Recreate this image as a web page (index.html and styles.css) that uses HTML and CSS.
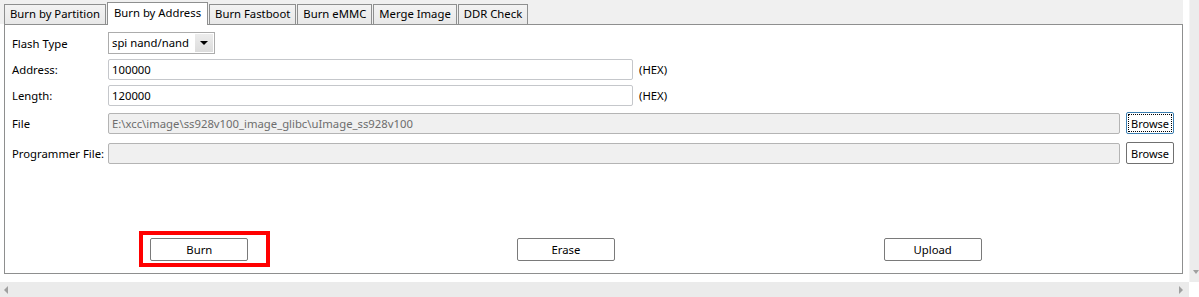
FILE: index.html
```html
<!DOCTYPE html>
<html lang="en">
<head>
  <meta charset="UTF-8" />
  <title>Burn by Address</title>
  <link rel="stylesheet" href="styles.css">
</head>
<body>
  <div class="frame">
    <div class="main">
      <div class="tabs">
        <div class="tab">Burn by Partition</div>
        <div class="tab active">Burn by Address</div>
        <div class="tab">Burn Fastboot</div>
        <div class="tab">Burn eMMC</div>
        <div class="tab">Merge Image</div>
        <div class="tab">DDR Check</div>
      </div>

      <div class="panel">
        <div class="row row-flash">
          <label>Flash Type</label>
          <div class="select">
            <span class="select-text">spi nand/nand</span>
            <span class="select-btn"><span class="caret"></span></span>
          </div>
        </div>

        <div class="row row-addr">
          <label>Address:</label>
          <input type="text" class="field short" value="100000" />
          <span class="unit">(HEX)</span>
        </div>

        <div class="row row-len">
          <label>Length:</label>
          <input type="text" class="field short" value="120000" />
          <span class="unit">(HEX)</span>
        </div>

        <div class="row row-file">
          <label>File</label>
          <input type="text" class="field wide" value="E:\xcc\image\ss928v100_image_glibc\uImage_ss928v100" disabled />
          <button class="browse focused">Browse</button>
        </div>

        <div class="row row-prog">
          <label>Programmer File:</label>
          <input type="text" class="field wide" value="" disabled />
          <button class="browse">Browse</button>
        </div>

        <div class="actions">
          <div class="cell">
            <button class="action">Burn</button>
            <span class="highlight"></span>
          </div>
          <div class="cell">
            <button class="action">Erase</button>
          </div>
          <div class="cell">
            <button class="action">Upload</button>
          </div>
        </div>
      </div>
    </div>

    <div class="vscroll">
      <span class="arrow-down"></span>
    </div>
  </div>

  <div class="hscroll">
    <span class="arrow-left"></span>
    <span class="arrow-right"></span>
  </div>
</body>
</html>
```

FILE: styles.css
```css
* {
  box-sizing: border-box;
}
body {
  margin: 0;
  padding: 0;
  background: #fff;
  font-family: 'Noto Sans', 'Liberation Sans', sans-serif;
  font-size: 11.3px;
  color: #000;
}
.frame {
  display: flex;
  height: 282px;
}
.main {
  width: 1183px;
}
.tabs {
  display: flex;
  align-items: flex-end;
  height: 24px;
  padding-left: 4px;
  background: #f0f0f0;
}
.tab {
  height: 20px;
  padding: 0 5px;
  line-height: 18px;
  border: 1px solid #8e8f8f;
  border-bottom: none;
  background: linear-gradient(#f3f3f3, #e8e8e8);
  margin-right: 1px;
  white-space: nowrap;
}
.tab.active {
  position: relative;
  z-index: 1;
  height: 23px;
  margin-bottom: -1px;
  padding: 0 6px;
  line-height: 20px;
  background: #fff;
}
.panel {
  margin-left: 4px;
  height: 250px;
  border: 1px solid #8e8f8f;
  background: #fff;
  padding: 7px 8px 0 7px;
}
.row {
  display: flex;
  align-items: center;
}
.row label {
  width: 96px;
  flex: none;
  white-space: nowrap;
}
.row-flash { height: 22px; }
.row-addr { height: 21px; margin-top: 5px; }
.row-len { height: 21px; margin-top: 5px; }
.row-file { height: 22px; margin-top: 6px; }
.row-prog { height: 22px; margin-top: 8px; }

.select {
  display: flex;
  width: 107px;
  height: 22px;
  border: 1px solid #acacac;
  background: #fff;
  padding: 1px;
}
.select-text {
  flex: 1;
  padding-left: 2px;
  line-height: 18px;
  white-space: nowrap;
}
.select-btn {
  width: 18px;
  background: linear-gradient(#ececec, #dcdcdc);
  display: flex;
  align-items: center;
  justify-content: center;
}
.caret {
  width: 0;
  height: 0;
  border-left: 4px solid transparent;
  border-right: 4px solid transparent;
  border-top: 4px solid #000;
}

.field {
  height: 21px;
  border: 1px solid #c5c7cb;
  border-radius: 2px;
  padding: 0 3px;
  font: inherit;
  color: #000;
  background: #fff;
}
.field.short {
  width: 525px;
}
.field.wide {
  flex: 1;
  border-color: #b4b4b4;
  background: #f0f0f0;
  color: #6d6d6d;
}
.unit {
  margin-left: 6px;
}
.browse {
  width: 48px;
  height: 22px;
  margin-left: 6px;
  padding: 0;
  font: inherit;
  font-size: 11px;
  background: #fff;
  border: 1px solid #707070;
  border-radius: 2px;
}
.browse.focused {
  border-color: #3c7fb1;
  outline: 1px dotted #000;
  outline-offset: -3px;
}

.actions {
  display: grid;
  grid-template-columns: repeat(3, 1fr);
  width: 1100px;
  margin: 74px 0 0 4px;
}
.cell {
  position: relative;
  display: flex;
  justify-content: center;
}
.action {
  width: 98px;
  height: 23px;
  padding: 0;
  font: inherit;
  background: #fff;
  border: 1px solid #7a7a7a;
  border-radius: 2px;
}
.highlight {
  position: absolute;
  left: 123px;
  top: -7px;
  width: 131px;
  height: 36px;
  border: 4px solid #ff0000;
}

.vscroll {
  margin-left: 6px;
  width: 10px;
  background: #ececec;
  border-left: 1px solid #f4f4f4;
  position: relative;
}
.arrow-down {
  position: absolute;
  left: 3px;
  bottom: 8px;
  width: 0;
  height: 0;
  border-left: 3px solid transparent;
  border-right: 3px solid transparent;
  border-top: 4px solid #a0a0a0;
}
.hscroll {
  display: flex;
  justify-content: space-between;
  align-items: center;
  width: 1189px;
  height: 15px;
  background: #ebebeb;
  padding: 0 6px 0 4px;
}
.arrow-left,
.arrow-right {
  width: 0;
  height: 0;
  border-top: 4px solid transparent;
  border-bottom: 4px solid transparent;
}
.arrow-left {
  border-right: 4px solid #a0a0a0;
}
.arrow-right {
  border-left: 4px solid #a0a0a0;
}
```
